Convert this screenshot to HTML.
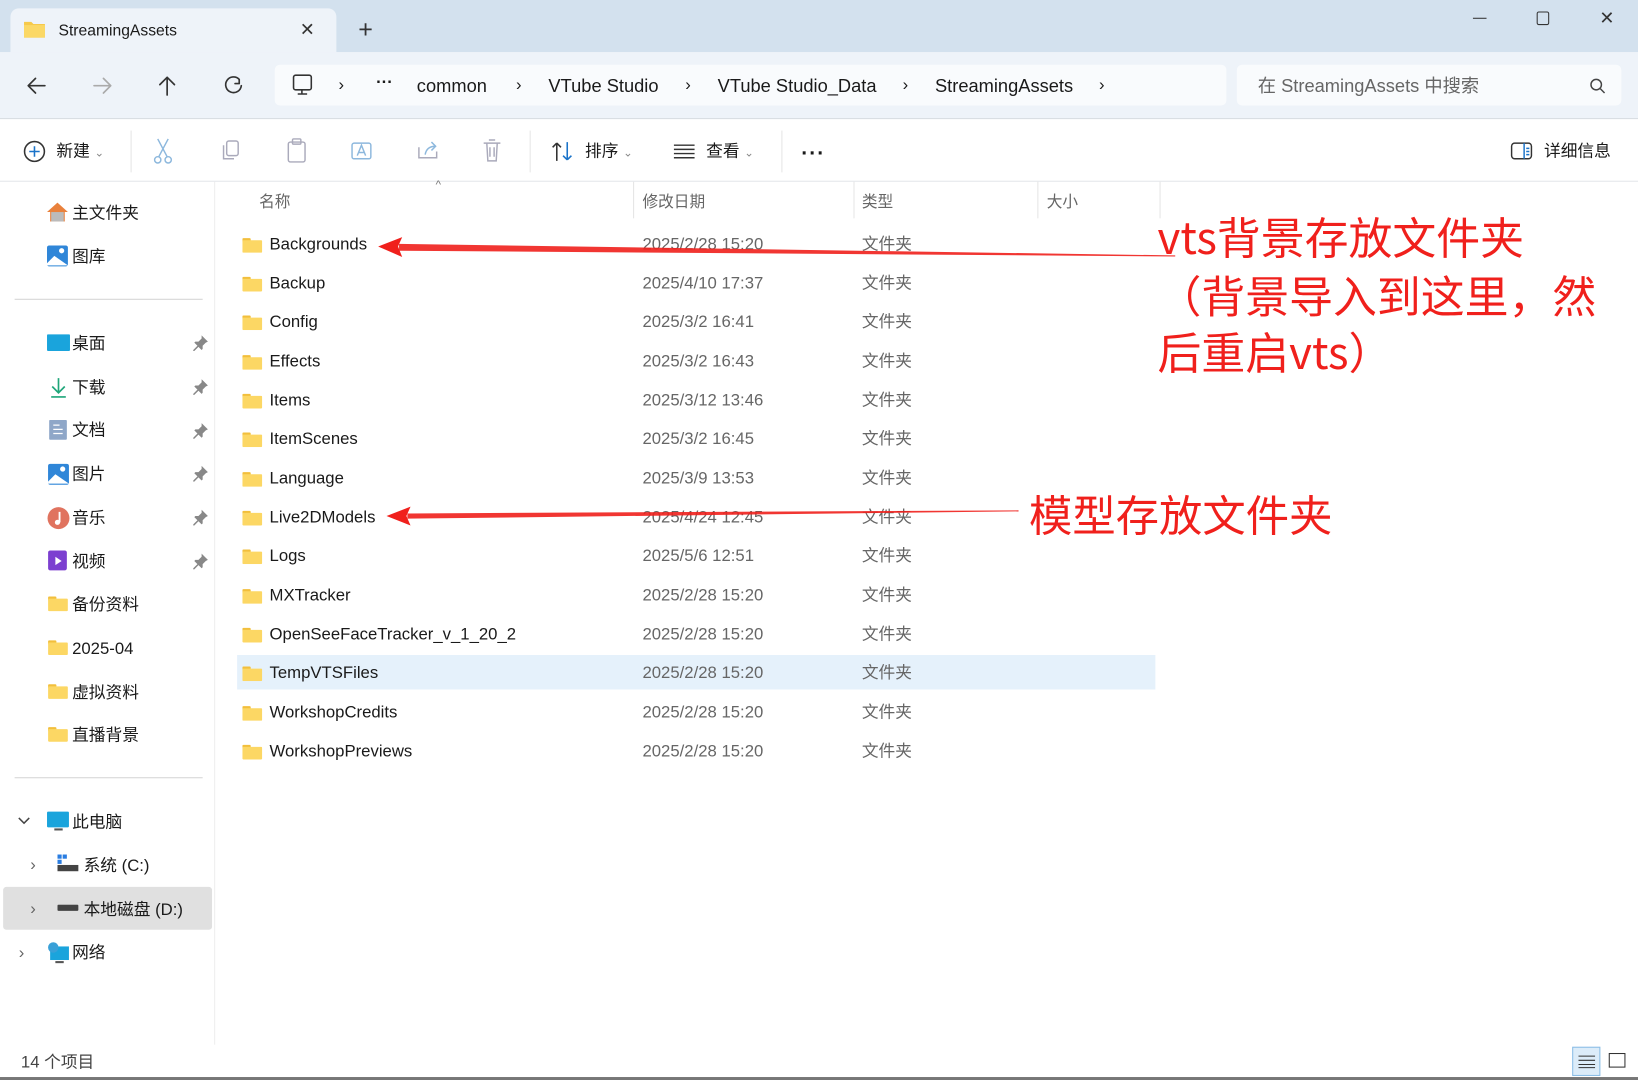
<!DOCTYPE html>
<html><head><meta charset="utf-8"><style>
html,body{margin:0;padding:0;width:1638px;height:1080px;overflow:hidden;background:#fff}
#s{position:absolute;left:0;top:0;width:1568px;height:1034px;transform:scale(1.04464);transform-origin:0 0;font-family:"Liberation Sans","Noto Sans CJK SC",sans-serif;color:#1a1a1a;background:#fff;line-height:1}
.a{position:absolute}
.t{font-size:16px;white-space:nowrap}
.row{position:absolute;left:227px;width:879px;height:37px}
.row .n{position:absolute;left:31px;top:12px;font-size:16px}
.row .d{position:absolute;left:388px;top:12px;font-size:16px;color:#666}
.row .k{position:absolute;left:598px;top:12px;font-size:16px;color:#666}
.row svg{position:absolute;left:5px;top:12px}
.side{position:absolute;font-size:16px;white-space:nowrap;margin-top:2px}
.red{position:absolute;color:#f0201c;font-size:42px;white-space:nowrap;font-family:"Noto Sans CJK SC","Liberation Sans",sans-serif;line-height:1}
</style></head><body><div id="s">
<div class="a" style="left:0;top:0;width:1568px;height:50px;background:#d3e1ee"></div>
<div class="a" style="left:10px;top:8px;width:312px;height:44px;background:#eef3f9;border-radius:8px 8px 0 0"></div>
<svg class="a" style="left:22px;top:19px" width="22" height="18"><path d="M1 2h7l2 2h11v13H1z" fill="#f6c94a"/><rect x="1" y="5" width="20" height="12" fill="#fbd866"/></svg>
<div class="a t" style="left:56px;top:22px;font-size:15px">StreamingAssets</div>
<div class="a" style="left:287px;top:20px;font-size:17px;color:#333">✕</div>
<div class="a" style="left:343px;top:17px;font-size:24px;color:#333;font-weight:300">+</div>
<div class="a" style="left:1410px;top:17px;width:13px;height:1px;background:#333"></div>
<div class="a" style="left:1471px;top:11px;width:10px;height:11px;border:1.5px solid #333;border-radius:2px"></div>
<div class="a" style="left:1531px;top:9px;font-size:17px;color:#333">✕</div>
<div class="a" style="left:0;top:50px;width:1568px;height:63px;background:#eef3f9;border-bottom:1px solid #d8dde2"></div>
<svg class="a" style="left:24px;top:71px" width="210" height="22" fill="none" stroke-width="1.6" stroke-linecap="round" stroke-linejoin="round">
<path d="M3 11h16M3 11l7-7M3 11l7 7" stroke="#333"/>
<path d="M66 11h16M82 11l-7-7M82 11l-7 7" stroke="#aaa"/>
<path d="M136 3v17M136 3l-7 7M136 3l7 7" stroke="#333"/>
<path d="M205 5a7.5 7.5 0 1 0 2 6M205 5v4h-4" stroke="#333"/>
</svg>
<div class="a" style="left:263px;top:62px;width:911px;height:39px;background:#f9fbfd;border-radius:5px"></div>
<svg class="a" style="left:279px;top:71px" width="24" height="22" fill="none" stroke="#333" stroke-width="1.5"><rect x="2" y="1" width="17" height="14" rx="2"/><path d="M10 15v4M6 19h9"/></svg>
<div class="a t" style="left:324px;top:74px;font-size:16px">›</div>
<div class="a t" style="left:360px;top:72px;font-size:16px;font-weight:bold">···</div>
<div class="a t" style="left:399px;top:74px;font-size:17.5px">common</div>
<div class="a t" style="left:494px;top:74px">›</div>
<div class="a t" style="left:525px;top:74px;font-size:17.5px">VTube Studio</div>
<div class="a t" style="left:656px;top:74px">›</div>
<div class="a t" style="left:687px;top:74px;font-size:17.5px">VTube Studio_Data</div>
<div class="a t" style="left:864px;top:74px">›</div>
<div class="a t" style="left:895px;top:74px;font-size:17.5px">StreamingAssets</div>
<div class="a t" style="left:1052px;top:74px">›</div>
<div class="a" style="left:1184px;top:62px;width:368px;height:39px;background:#f9fbfd;border-radius:5px"></div>
<div class="a t" style="left:1204px;top:74px;font-size:17.5px;color:#666">在 StreamingAssets 中搜索</div>
<svg class="a" style="left:1521px;top:74px" width="16" height="16" fill="none" stroke="#444" stroke-width="1.4"><circle cx="7" cy="7" r="5"/><path d="M11 11l4 4"/></svg>
<div class="a" style="left:0;top:173px;width:1568px;height:1px;background:#e3e6ea"></div>
<svg class="a" style="left:22px;top:134px" width="22" height="22" fill="none" stroke-width="1.5"><circle cx="11" cy="11" r="9.5" stroke="#333"/><path d="M11 6v10M6 11h10" stroke="#1a73c9"/></svg>
<div class="a t" style="left:54px;top:138px">新建 <span style="font-size:11px;color:#888">⌄</span></div>
<div class="a" style="left:125px;top:125px;width:1px;height:40px;background:#e5e5e5"></div>
<svg class="a" style="left:145px;top:130px" width="350" height="30" fill="none" stroke-width="1.4">
<path d="M6 3l9 17M16 3l-9 17" stroke="#8db8dd"/><circle cx="6" cy="23" r="3" stroke="#8db8dd"/><circle cx="16" cy="23" r="3" stroke="#8db8dd"/>
<rect x="72" y="5" width="11" height="14" rx="2" stroke="#aab"/><path d="M69 9v13h10" stroke="#aab"/>
<rect x="131" y="6" width="16" height="19" rx="2" stroke="#aab"/><rect x="135" y="3" width="8" height="5" rx="1" stroke="#aab"/>
<rect x="192" y="7" width="18" height="15" rx="2" stroke="#8db8dd"/><path d="M197 19l4-10 4 10M198 16h6" stroke="#8db8dd"/>
<path d="M256 11v10h17v-6" stroke="#aab"/><path d="M262 18c1-6 5-8 10-8M268 6l4 4-4 4" stroke="#8db8dd"/>
<path d="M318 7h16M321 7l1 17h8l1-17M323 4h6M324 11v9M328 11v9" stroke="#aab"/>
</svg>
<div class="a" style="left:507px;top:125px;width:1px;height:40px;background:#e5e5e5"></div>
<svg class="a" style="left:527px;top:134px" width="24" height="22" fill="none" stroke-width="1.5"><path d="M6 20V3M6 3L2 7M6 3l4 4" stroke="#333"/><path d="M16 2v17M16 19l-4-4M16 19l4-4" stroke="#1a73c9"/></svg>
<div class="a t" style="left:560px;top:138px">排序 <span style="font-size:11px;color:#888">⌄</span></div>
<svg class="a" style="left:645px;top:138px" width="20" height="14" stroke="#333" stroke-width="1.4"><path d="M0 1h20M0 5h20M0 9h20M0 13h20"/></svg>
<div class="a t" style="left:676px;top:138px">查看 <span style="font-size:11px;color:#888">⌄</span></div>
<div class="a" style="left:748px;top:125px;width:1px;height:40px;background:#e5e5e5"></div>
<div class="a t" style="left:767px;top:137px;font-size:20px;font-weight:bold;letter-spacing:1px">···</div>
<svg class="a" style="left:1446px;top:136px" width="22" height="18" fill="none" stroke-width="1.4"><rect x="1" y="1" width="19" height="15" rx="3" stroke="#333"/><path d="M13 1v15" stroke="#1a73c9"/><path d="M15 6h3M15 9h3M15 12h3" stroke="#1a73c9"/></svg>
<div class="a t" style="left:1478px;top:138px">详细信息</div>
<div class="a" style="left:205px;top:174px;width:1px;height:826px;background:#ededed"></div>
<svg class="a" style="left:44px;top:193px" width="22" height="20"><path d="M11 1L1 10h3v9h14v-9h3z" fill="#e9813c"/><rect x="5" y="10" width="12" height="9" fill="#bbb"/></svg>
<div class="side" style="left:69px;top:195px">主文件夹</div>
<svg class="a" style="left:44px;top:234px" width="22" height="22"><rect x="1" y="1" width="20" height="20" rx="2" fill="#2f86d8"/><path d="M1 18l7-7 13 9H1z" fill="#fff"/><circle cx="15" cy="6" r="2.5" fill="#fff"/></svg>
<div class="side" style="left:69px;top:237px">图库</div>
<div class="a" style="left:14px;top:286px;width:180px;height:1px;background:#d5d5d5"></div>
<svg class="a" style="left:45px;top:320px" width="22" height="18"><rect width="22" height="16" rx="1" fill="#1aa4dc"/></svg><div class="side" style="left:69px;top:320px">桌面</div>
<svg class="a" style="left:47px;top:360px" width="18" height="22" fill="none" stroke="#1fa67a" stroke-width="1.6"><path d="M9 2v14M3 10l6 6 6-6M2 20h14"/></svg><div class="side" style="left:69px;top:362px">下载</div>
<svg class="a" style="left:47px;top:402px" width="18" height="20"><rect width="17" height="19" rx="1" fill="#8fa7c8"/><path d="M4 5h6M4 9h9M4 13h9" stroke="#fff" stroke-width="1.2"/></svg><div class="side" style="left:69px;top:403px">文档</div>
<svg class="a" style="left:45px;top:443px" width="22" height="22"><rect x="1" y="1" width="20" height="20" rx="2" fill="#2f86d8"/><path d="M1 18l7-7 13 9H1z" fill="#fff"/><circle cx="15" cy="6" r="2.5" fill="#fff"/></svg><div class="side" style="left:69px;top:445px">图片</div>
<svg class="a" style="left:45px;top:485px" width="22" height="22"><circle cx="11" cy="11" r="10.5" fill="#e0735f"/><path d="M12 5v10" stroke="#fff" stroke-width="1.8"/><circle cx="10" cy="15" r="2.5" fill="#fff"/></svg><div class="side" style="left:69px;top:487px">音乐</div>
<svg class="a" style="left:46px;top:527px" width="20" height="20"><rect width="18" height="19" rx="2" fill="#7c3fd0"/><path d="M7 6v8l6-4z" fill="#fff"/></svg><div class="side" style="left:69px;top:529px">视频</div>
<svg class="a" style="left:184px;top:320px" width="16" height="230" fill="#888"><g id="p"><path d="M9 1l6 6-2 1-3 3v3l-1 1-3-3-4 4-1 0 0-1 4-4-3-3 1-1h3l3-3z"/></g><use href="#p" y="42"/><use href="#p" y="84"/><use href="#p" y="125"/><use href="#p" y="167"/><use href="#p" y="209"/></svg>
<svg class="a" style="left:46px;top:570px" width="19" height="120"><g id="f"><rect x="0" y="1" width="8" height="4" rx="1" fill="#f2bf3c"/><rect x="0" y="3" width="19" height="12" rx="1" fill="#fcd764"/></g><use href="#f" y="42"/><use href="#f" y="84"/></svg>
<svg class="a" style="left:46px;top:695px" width="19" height="16"><use href="#f"/></svg>
<div class="side" style="left:69px;top:570px">备份资料</div>
<div class="side" style="left:69px;top:612px">2025-04</div>
<div class="side" style="left:69px;top:654px">虚拟资料</div>
<div class="side" style="left:69px;top:695px">直播背景</div>
<div class="a" style="left:14px;top:744px;width:180px;height:1px;background:#d5d5d5"></div>
<svg class="a" style="left:16px;top:780px" width="14" height="12" fill="none" stroke="#444" stroke-width="1.4"><path d="M2 3l5 5 5-5"/></svg>
<svg class="a" style="left:45px;top:776px" width="22" height="22"><rect x="0" y="1" width="21" height="15" rx="1" fill="#1aa4dc"/><rect x="7" y="17" width="8" height="2" fill="#555"/></svg>
<div class="side" style="left:69px;top:778px">此电脑</div>
<div class="side" style="left:29px;top:819px;color:#666">›</div>
<svg class="a" style="left:55px;top:818px" width="22" height="18"><rect x="0" y="0" width="4" height="4" fill="#2a7de1"/><rect x="5" y="0" width="4" height="4" fill="#2a7de1"/><rect x="0" y="5" width="4" height="4" fill="#2a7de1"/><rect x="0" y="10" width="20" height="6" fill="#444"/></svg>
<div class="side" style="left:80px;top:820px">系统 (C:)</div>
<div class="a" style="left:3px;top:849px;width:200px;height:41px;background:#e0e0e0;border-radius:3px"></div>
<div class="side" style="left:29px;top:861px;color:#666">›</div>
<svg class="a" style="left:55px;top:866px" width="22" height="8"><rect width="20" height="6" rx="1" fill="#444"/></svg>
<div class="side" style="left:80px;top:862px">本地磁盘 (D:)</div>
<div class="side" style="left:18px;top:903px;color:#666">›</div>
<svg class="a" style="left:45px;top:901px" width="22" height="22"><rect x="3" y="5" width="18" height="13" fill="#1aa4dc"/><circle cx="6" cy="6" r="5" fill="#39a0d8"/><rect x="8" y="19" width="8" height="2" fill="#555"/></svg>
<div class="side" style="left:69px;top:903px">网络</div>
<div class="a t" style="left:248px;top:186px;color:#666;font-size:15px">名称</div>
<div class="a" style="left:417px;top:172px;font-size:11px;color:#777">^</div>
<div class="a" style="left:606px;top:174px;width:1px;height:35px;background:#e5e5e5"></div>
<div class="a t" style="left:615px;top:186px;color:#666;font-size:15px">修改日期</div>
<div class="a" style="left:817px;top:174px;width:1px;height:35px;background:#e5e5e5"></div>
<div class="a t" style="left:825px;top:186px;color:#666;font-size:15px">类型</div>
<div class="a" style="left:993px;top:174px;width:1px;height:35px;background:#e5e5e5"></div>
<div class="a t" style="left:1002px;top:186px;color:#666;font-size:15px">大小</div>
<div class="a" style="left:1110px;top:174px;width:1px;height:35px;background:#e5e5e5"></div>
<div class="row" style="top:215px"><svg width="19" height="15"><use href="#f"/></svg><div class="n">Backgrounds</div><div class="d">2025/2/28 15:20</div><div class="k">文件夹</div></div>
<div class="row" style="top:252px"><svg width="19" height="15"><use href="#f"/></svg><div class="n">Backup</div><div class="d">2025/4/10 17:37</div><div class="k">文件夹</div></div>
<div class="row" style="top:289px"><svg width="19" height="15"><use href="#f"/></svg><div class="n">Config</div><div class="d">2025/3/2 16:41</div><div class="k">文件夹</div></div>
<div class="row" style="top:327px"><svg width="19" height="15"><use href="#f"/></svg><div class="n">Effects</div><div class="d">2025/3/2 16:43</div><div class="k">文件夹</div></div>
<div class="row" style="top:364px"><svg width="19" height="15"><use href="#f"/></svg><div class="n">Items</div><div class="d">2025/3/12 13:46</div><div class="k">文件夹</div></div>
<div class="row" style="top:401px"><svg width="19" height="15"><use href="#f"/></svg><div class="n">ItemScenes</div><div class="d">2025/3/2 16:45</div><div class="k">文件夹</div></div>
<div class="row" style="top:439px"><svg width="19" height="15"><use href="#f"/></svg><div class="n">Language</div><div class="d">2025/3/9 13:53</div><div class="k">文件夹</div></div>
<div class="row" style="top:476px"><svg width="19" height="15"><use href="#f"/></svg><div class="n">Live2DModels</div><div class="d">2025/4/24 12:45</div><div class="k">文件夹</div></div>
<div class="row" style="top:513px"><svg width="19" height="15"><use href="#f"/></svg><div class="n">Logs</div><div class="d">2025/5/6 12:51</div><div class="k">文件夹</div></div>
<div class="row" style="top:551px"><svg width="19" height="15"><use href="#f"/></svg><div class="n">MXTracker</div><div class="d">2025/2/28 15:20</div><div class="k">文件夹</div></div>
<div class="row" style="top:588px"><svg width="19" height="15"><use href="#f"/></svg><div class="n">OpenSeeFaceTracker_v_1_20_2</div><div class="d">2025/2/28 15:20</div><div class="k">文件夹</div></div>
<div class="row" style="top:627px;height:33px;background:#e5f1fb"><svg width="19" height="15" style="top:10px"><use href="#f"/></svg><div class="n" style="top:10px">TempVTSFiles</div><div class="d" style="top:10px">2025/2/28 15:20</div><div class="k" style="top:10px">文件夹</div></div>
<div class="row" style="top:663px"><svg width="19" height="15"><use href="#f"/></svg><div class="n">WorkshopCredits</div><div class="d">2025/2/28 15:20</div><div class="k">文件夹</div></div>
<div class="row" style="top:700px"><svg width="19" height="15"><use href="#f"/></svg><div class="n">WorkshopPreviews</div><div class="d">2025/2/28 15:20</div><div class="k">文件夹</div></div>
<svg class="a" style="left:0;top:0" width="1568" height="1034">
<path d="M382 233.5L1125 244.5L1125 245.5L382 240z" fill="#f0201c" opacity=".9"/>
<path d="M362 236L385 227L381 236L385 246z" fill="#f0201c"/>
<path d="M390 491.5L975 488.5L975 489.5L390 496.5z" fill="#f0201c" opacity=".9"/>
<path d="M370 494L393 485L389 494L393 503z" fill="#f0201c"/>
</svg>
<div class="red" style="left:1108px;top:205px">vts背景存放文件夹</div>
<div class="red" style="left:1108px;top:261px">（背景导入到这里，然</div>
<div class="red" style="left:1108px;top:315px">后重启vts）</div>
<div class="red" style="left:985px;top:471px;font-size:41.5px">模型存放文件夹</div>
<div class="a t" style="left:20px;top:1010px;color:#444">14 个项目</div>
<div class="a" style="left:1505px;top:1002px;width:27px;height:28px;background:#dcecf9;border:1px solid #8bbde6;box-sizing:border-box"></div>
<svg class="a" style="left:1511px;top:1009px" width="16" height="14" stroke="#333"><path d="M0 2h16M0 6h16M0 10h16M0 13h16"/></svg>
<div class="a" style="left:1540px;top:1008px;width:14px;height:12px;border:1px solid #333"></div>
<div class="a" style="left:0;top:1031px;width:1568px;height:3px;background:#777"></div>
</div></body></html>
